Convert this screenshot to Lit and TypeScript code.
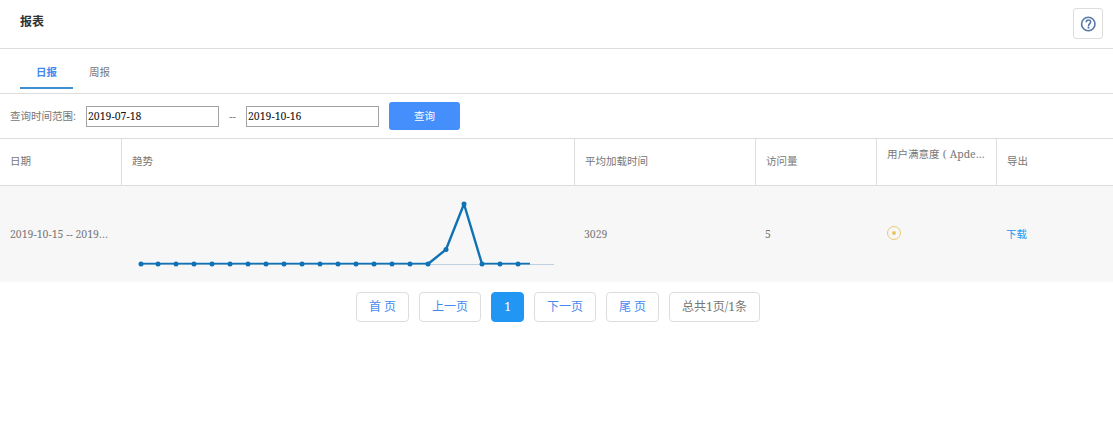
import { LitElement, html, css, svg } from "lit";
import { customElement } from "lit/decorators.js";
import { classMap } from "lit/directives/class-map.js";

const TREND = Array.from({ length: 22 }, (_, i) => ({
  x: 9 + i * 18 - (i === 0 ? 0 : 1),
  y: i === 17 ? 49.5 : i === 18 ? 4 : 64,
}));

@customElement("trend-chart")
class TrendChart extends LitElement {
  static styles = css`
    :host { display: block; }
    svg { display: block; }
    .axis { stroke: #c0d0e0; stroke-width: 1; }
    .line { fill: none; stroke: #1072b5; stroke-width: 2.4; stroke-linejoin: round; }
    .flat { stroke: #1072b5; stroke-width: 1.6; }
    .dot { fill: #1072b5; }
  `;
  render() {
    return html`<svg width="432" height="76" viewBox="0 0 432 76">
      <line class="axis" x1="9" y1="64.5" x2="422" y2="64.5" />
      <line class="flat" x1="9" y1="63.6" x2="296" y2="63.6" />
      <line class="flat" x1="350" y1="63.6" x2="398" y2="63.6" />
      <polyline class="line" points=${TREND.slice(16, 20).map((p) => `${p.x},${p.y}`).join(" ")} />
      ${TREND.map((p) => svg`<circle class="dot" cx=${p.x} cy=${p.y} r="2.5" />`)}
    </svg>`;
  }
}

@customElement("app-root")
class AppRoot extends LitElement {
  static styles = css`
    :host {
      display: block;
      height: 446px;
      overflow: hidden;
      background: #fff;
      color: #777;
      font: 10.5px/16px "Droid Serif", "Noto Serif", "Liberation Serif", "Noto Sans CJK SC", serif;
    }
    * { box-sizing: border-box; }
    .head { display: flex; justify-content: space-between; align-items: flex-start; height: 49px; padding: 8px 10px 0 20px; border-bottom: 1px solid #ddd; }
    h1 { margin: 5px 0 0; font-size: 12px; line-height: 18px; font-weight: 700; color: #333; }
    .help { width: 30px; height: 31px; display: flex; align-items: center; justify-content: center; padding: 0; background: #fff; border: 1px solid #ddd; border-radius: 3px; }
    .tabs { display: flex; height: 45px; padding-left: 20px; border-bottom: 1px solid #ddd; }
    .tab { height: 40px; padding: 15px 16px 0; }
    .active { color: #448af0; font-weight: 700; border-bottom: 2px solid #3f8fd0; }
    .filter { display: flex; align-items: center; height: 45px; padding-left: 10px; border-bottom: 1px solid #ddd; }
    .label { width: 76px; }
    input { width: 133px; height: 21px; margin: 0; padding: 0 1px; border: 1px solid #a3a3a3; border-radius: 0; font: inherit; color: #111; background: #fff; }
    .dash { width: 27px; text-align: center; }
    .query { width: 71px; height: 28px; margin-left: 10px; padding: 0; border: 0; border-radius: 3px; background: #448ffb; color: #fff; font: inherit; }
    .row { display: grid; grid-template-columns: 122px 453px 181px 121px 120px 1fr; }
    .cell { padding: 0 10px; display: flex; align-items: center; min-width: 0; }
    .cell span { overflow: hidden; text-overflow: ellipsis; white-space: nowrap; }
    .thead { height: 47px; border-bottom: 1px solid #ddd; }
    .thead .cell { padding-bottom: 2px; border-right: 1px solid #ddd; }
    .thead .cell:last-child { border-right: 0; }
    .thead .high { padding-bottom: 16px; padding-right: 5px; word-spacing: 0.6px; }
    .body { height: 96px; background: #f7f7f7; }
    .body .cell { padding: 0 12px 0 10px; }
    .body .trend { align-items: flex-start; padding-top: 14px; }
    .body .cell:nth-child(n + 3) { padding-left: 9px; }
    .body .face { padding-bottom: 2px; }
    .link { color: #2196f3; }
    .pager { display: flex; justify-content: center; gap: 10px; padding: 10px 0 0 3px; font-size: 12px; }
    .page { height: 30px; line-height: 28px; text-align: center; border: 1px solid #ddd; border-radius: 4px; color: #448af0; }
    .current { background: #2196f3; border-color: #2196f3; color: #fff; }
    .total { color: #777; }
    .w53 { width: 53px; } .w62 { width: 62px; } .w33 { width: 33px; } .w91 { width: 91px; }
  `;
  render() {
    const heads = ["日期", "趋势", "平均加载时间", "访问量", "用户满意度 ( Apde…", "导出"];
    const pages = [
      ["首 页", "w53"], ["上一页", "w62"], ["1", "w33 current"],
      ["下一页", "w62"], ["尾 页", "w53"], ["总共1页/1条", "w91 total"],
    ];
    return html`
      <div class="head">
        <h1>报表</h1>
        <button class="help" aria-label="帮助">
          <svg width="16" height="16" viewBox="0 0 16 16" fill="none" stroke="#5679a6">
            <circle cx="8.3" cy="8" r="6.7" stroke-width="1.6" />
            <path d="M6.2 6.2C6.2 3.2 10.6 3.3 10.6 5.9C10.6 7.6 8.5 7.7 8.5 10.2" stroke-width="1.6" />
            <path d="M8.5 10.6V12.6" stroke-width="1.7" />
          </svg>
        </button>
      </div>
      <div class="tabs"><div class="tab active">日报</div><div class="tab">周报</div></div>
      <div class="filter">
        <span class="label">查询时间范围:</span>
        <input .value=${"2019-07-18"} />
        <span class="dash">--</span>
        <input .value=${"2019-10-16"} />
        <button class="query">查询</button>
      </div>
      <div class="row thead">
        ${heads.map((h, i) => html`<div class=${classMap({ cell: true, high: i === 4 })}><span>${h}</span></div>`)}
      </div>
      <div class="row body">
        <div class="cell"><span>2019-10-15 -- 2019…</span></div>
        <div class="cell trend"><trend-chart></trend-chart></div>
        <div class="cell"><span>3029</span></div>
        <div class="cell"><span>5</span></div>
        <div class="cell face">
          <svg width="16" height="16" viewBox="0 0 16 16">
            <circle cx="8" cy="8" r="6.5" fill="none" stroke="#ebcb72" />
            <circle cx="8" cy="8" r="1.9" fill="#e8c25c" />
          </svg>
        </div>
        <div class="cell"><span class="link">下载</span></div>
      </div>
      <div class="pager">${pages.map(([t, c]) => html`<span class="page ${c}">${t}</span>`)}</div>
    `;
  }
}
